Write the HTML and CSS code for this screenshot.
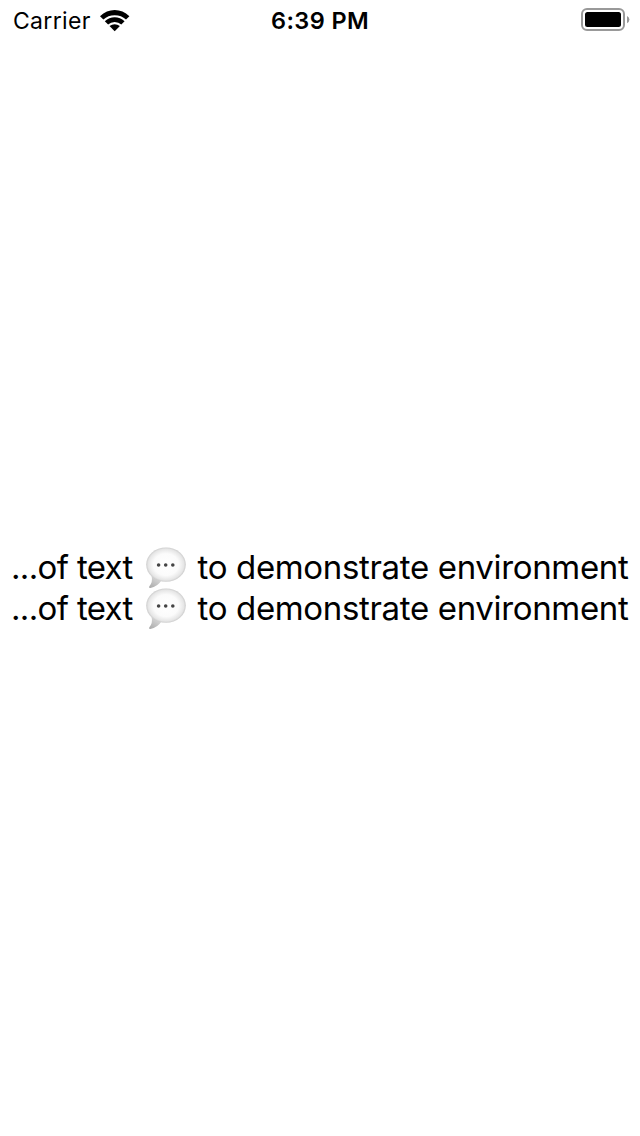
FILE: index.html
```html
<!DOCTYPE html>
<html lang="en">
<head>
<meta charset="utf-8">
<title>Environment</title>
<link rel="stylesheet" href="styles.css">
</head>
<body>
<div class="screen">
  <header class="status">
    <div class="network">
      <span class="carrier">Carrier</span>
      <svg class="wifi" width="30" height="22" viewBox="0 0 30 22">
        <path d="M0 6.2Q6.5 0 14.7 0T29.4 6.2L26 9.6Q21.4 5.2 14.7 5.2T3.4 9.6Z"/>
        <path d="M4.8 11.2Q9.2 7.3 14.7 7.3T24.6 11.2L21.3 14.5Q18.6 12 14.7 12T8.1 14.5Z"/>
        <path d="M9.5 16Q12 14.2 14.7 14.2T19.9 16L14.7 21.3Z"/>
      </svg>
    </div>
    <span class="time">6:39 PM</span>
    <svg class="battery" width="48" height="24" viewBox="0 0 48 24">
      <rect class="shell" x="1" y="1" width="42" height="21" rx="5"/>
      <rect x="4" y="4" width="36" height="15" rx="2.5"/>
      <path class="cap" d="M46 8Q48.4 9 48.4 11.6T46 15.2Z"/>
    </svg>
  </header>
  <main class="content">
    <svg class="defs" width="0" height="0">
      <defs>
        <radialGradient id="body" cx=".5" cy=".5" r=".53">
          <stop offset="0" stop-color="#fff"/>
          <stop offset=".6" stop-color="#fbfbfb"/>
          <stop offset=".85" stop-color="#e6e6e6"/>
          <stop offset="1" stop-color="#bcbcbc"/>
        </radialGradient>
        <linearGradient id="tail" x1="0" y1="1" x2=".6" y2="0">
          <stop offset="0" stop-color="#a8a8a8"/>
          <stop offset="1" stop-color="#dcdcdc"/>
        </linearGradient>
        <symbol id="bubble" viewBox="0 0 40 42">
          <path fill="url(#tail)" d="M5.6 29Q7 35.5 3.2 39.4Q2.4 41 4.4 41Q11.5 39.6 15.5 33.5Z"/>
          <ellipse cx="20" cy="17.6" rx="19.8" ry="17.2" fill="url(#body)"/>
          <g fill="#444"><circle cx="12.6" cy="18" r="1.8"/><circle cx="19.7" cy="18" r="1.8"/><circle cx="26.8" cy="18" r="1.8"/></g>
        </symbol>
      </defs>
    </svg>
    <p class="line"><span class="lead">...of text</span><svg class="bubble" width="40" height="42"><use href="#bubble"/></svg><span class="rest">to demonstrate environment</span></p>
    <p class="line"><span class="lead">...of text</span><svg class="bubble" width="40" height="42"><use href="#bubble"/></svg><span class="rest">to demonstrate environment</span></p>
  </main>
</div>
</body>
</html>
```
FILE: styles.css
```css
body {
  margin: 0;
  background: #fff;
  color: #000;
  font-family: Inter, "Liberation Sans", sans-serif;
}
.screen {
  display: flex;
  flex-direction: column;
  width: 640px;
  height: 1136px;
  overflow: hidden;
}
.status {
  display: grid;
  grid-template-columns: 1fr auto 1fr;
  height: 40px;
  line-height: 42px;
  font-size: 23.5px;
}
.network {
  display: flex;
  padding-left: 13px;
}
.carrier {
  width: 87px;
  font-size: 23px;
  letter-spacing: .32px;
}
.wifi {
  margin-top: 10px;
}
.time {
  font-weight: 600;
  letter-spacing: .4px;
}
.battery {
  justify-self: end;
  margin: 8px 11px 0 0;
  overflow: visible;
}
.shell {
  fill: none;
  stroke: #999;
  stroke-width: 2;
}
.cap {
  fill: #999;
}
.content {
  flex: 1;
  display: flex;
  flex-direction: column;
  justify-content: center;
}
.defs {
  display: block;
  height: 0;
}
.line {
  display: flex;
  height: 41px;
  margin: 0;
  padding-left: 11px;
  line-height: 41px;
  font-size: 33px;
  white-space: nowrap;
}
.lead {
  width: 135px;
  letter-spacing: -.65px;
}
.bubble {
  flex: none;
}
.rest {
  margin-left: 11.5px;
  letter-spacing: -.34px;
}
```
